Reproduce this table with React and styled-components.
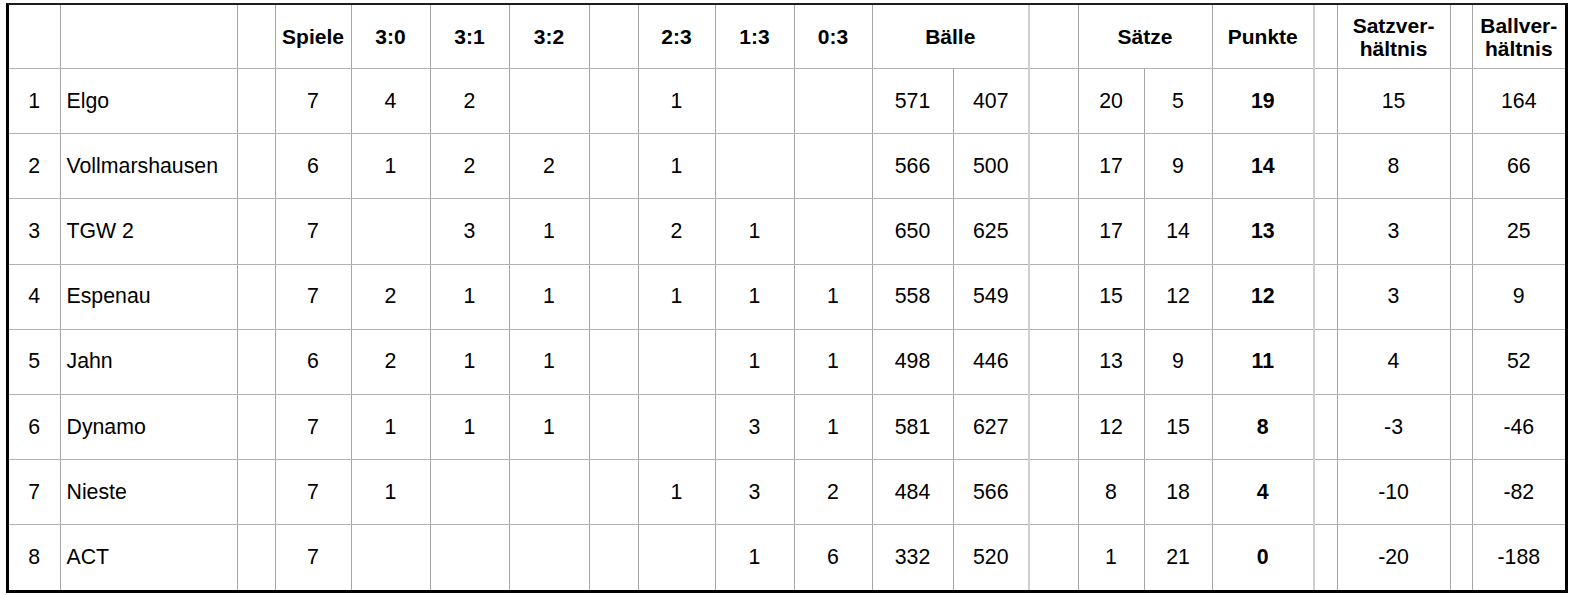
import React from "react";
import styled, { createGlobalStyle } from "styled-components";

const Global = createGlobalStyle`
  html, body { margin: 0; padding: 0; background: #fff; }
  body { font-family: "Liberation Sans", Arial, sans-serif; color: #000; }
`;

const TOTAL = 1556;

const Frame = styled.div`
  margin: 3px 0 0 6px;
  width: ${TOTAL}px;
  border-top: 2px solid #1c1c1c;
  border-left: 3px solid #000;
  border-right: 3px solid #000;
  border-bottom: 3px solid #000;
`;

const Table = styled.table`
  border-collapse: collapse;
  table-layout: fixed;
  width: ${TOTAL}px;
  font-size: 21.3px;
`;

const Cell = styled.td`
  padding: 0;
  text-align: ${(p) => (p.$left ? "left" : "center")};
  padding-left: ${(p) => (p.$left ? "6px" : "0")};
  font-weight: ${(p) => (p.$bold ? 700 : 400)};
  height: ${(p) => p.$h || 64.2}px;
  vertical-align: middle;
  white-space: nowrap;
  border-right: ${(p) => (p.$last ? "none" : p.$soft ? "2px solid #cfcfcf" : "1px solid #a6a6a6")};
  border-bottom: ${(p) => (p.$lastRow ? "none" : "1px solid #b2b2b2")};
`;

const HeadCell = styled(Cell).attrs({ as: "th" })`
  font-weight: 700;
  font-size: 21px;
  line-height: 23px;
  white-space: normal;
`;

const widths = [51, 177, 38, 76, 79, 79, 80, 49, 77, 79, 78, 81, 76, 49, 66, 68, 102, 23, 113, 22, 93];
const softAfter = new Set([12, 16]);

const rows = [
  ["1", "Elgo", "", "7", "4", "2", "", "", "1", "", "", "571", "407", "", "20", "5", "19", "", "15", "", "164"],
  ["2", "Vollmarshausen", "", "6", "1", "2", "2", "", "1", "", "", "566", "500", "", "17", "9", "14", "", "8", "", "66"],
  ["3", "TGW 2", "", "7", "", "3", "1", "", "2", "1", "", "650", "625", "", "17", "14", "13", "", "3", "", "25"],
  ["4", "Espenau", "", "7", "2", "1", "1", "", "1", "1", "1", "558", "549", "", "15", "12", "12", "", "3", "", "9"],
  ["5", "Jahn", "", "6", "2", "1", "1", "", "", "1", "1", "498", "446", "", "13", "9", "11", "", "4", "", "52"],
  ["6", "Dynamo", "", "7", "1", "1", "1", "", "", "3", "1", "581", "627", "", "12", "15", "8", "", "-3", "", "-46"],
  ["7", "Nieste", "", "7", "1", "", "", "", "1", "3", "2", "484", "566", "", "8", "18", "4", "", "-10", "", "-82"],
  ["8", "ACT", "", "7", "", "", "", "", "", "1", "6", "332", "520", "", "1", "21", "0", "", "-20", "", "-188"],
];

const header = [
  { t: "", span: 1, idx: 0 },
  { t: "", span: 1, idx: 1 },
  { t: "", span: 1, idx: 2 },
  { t: "Spiele", span: 1, idx: 3 },
  { t: "3:0", span: 1, idx: 4 },
  { t: "3:1", span: 1, idx: 5 },
  { t: "3:2", span: 1, idx: 6 },
  { t: "", span: 1, idx: 7 },
  { t: "2:3", span: 1, idx: 8 },
  { t: "1:3", span: 1, idx: 9 },
  { t: "0:3", span: 1, idx: 10 },
  { t: "Bälle", span: 2, idx: 12 },
  { t: "", span: 1, idx: 13 },
  { t: "Sätze", span: 2, idx: 15 },
  { t: "Punkte", span: 1, idx: 16 },
  { t: "", span: 1, idx: 17 },
  { t: ["Satzver-", "hältnis"], span: 1, idx: 18 },
  { t: "", span: 1, idx: 19 },
  { t: ["Ballver-", "hältnis"], span: 1, idx: 20 },
];

export default function App() {
  return (
    <>
      <Global />
      <Frame>
        <Table>
          <colgroup>
            {widths.map((w, i) => (
              <col key={i} style={{ width: w }} />
            ))}
          </colgroup>
          <thead>
            <tr>
              {header.map((h, i) => (
                <HeadCell
                  key={i}
                  colSpan={h.span}
                  $h={63}
                  $soft={softAfter.has(h.idx)}
                  $last={h.idx === 20}
                >
                  {Array.isArray(h.t) ? (
                    <>
                      {h.t[0]}
                      <br />
                      {h.t[1]}
                    </>
                  ) : (
                    h.t
                  )}
                </HeadCell>
              ))}
            </tr>
          </thead>
          <tbody>
            {rows.map((r, ri) => (
              <tr key={ri}>
                {r.map((v, ci) => (
                  <Cell
                    key={ci}
                    $left={ci === 1}
                    $bold={ci === 16}
                    $soft={softAfter.has(ci)}
                    $last={ci === 20}
                    $lastRow={ri === rows.length - 1}
                  >
                    {v}
                  </Cell>
                ))}
              </tr>
            ))}
          </tbody>
        </Table>
      </Frame>
    </>
  );
}
